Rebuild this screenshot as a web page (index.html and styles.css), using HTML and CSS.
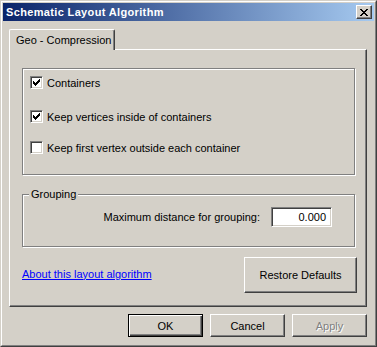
FILE: index.html
```html
<!DOCTYPE html>
<html lang="en">
<head>
    <meta charset="UTF-8">
    <title>Schematic Layout Algorithm</title>
    <link rel="stylesheet" href="styles.css">
</head>
<body>

    <div class="window">
        <div class="frame">
            <div class="titlebar">
                <span class="title">Schematic Layout Algorithm</span>
                <button class="close" title="Close">
                    <svg width="8" height="7" viewBox="0 0 8 7" shape-rendering="crispEdges">
                        <path d="M0 0h2v1H0zM6 0h2v1H6zM1 1h2v1H1zM5 1h2v1H5zM2 2h4v1H2zM3 3h2v1H3zM2 4h4v1H2zM1 5h2v1H1zM5 5h2v1H5zM0 6h2v1H0zM6 6h2v1H6z" fill="#000"/>
                    </svg>
                </button>
            </div>

            <div class="client">
                <div class="tabs">
                    <div class="tab">Geo - Compression</div>
                </div>

                <div class="panel">
                    <div class="group options">
                        <label class="check">
                            <span class="box checked">
                                <svg width="7" height="7" viewBox="0 0 7 7" shape-rendering="crispEdges"><path d="M0 2h1v3H0zM1 3h1v3H1zM2 4h1v3H2zM3 3h1v3H3zM4 2h1v3H4zM5 1h1v3H5zM6 0h1v3H6z" fill="#000"/></svg>
                            </span>
                            Containers
                        </label>
                        <label class="check">
                            <span class="box checked">
                                <svg width="7" height="7" viewBox="0 0 7 7" shape-rendering="crispEdges"><path d="M0 2h1v3H0zM1 3h1v3H1zM2 4h1v3H2zM3 3h1v3H3zM4 2h1v3H4zM5 1h1v3H5zM6 0h1v3H6z" fill="#000"/></svg>
                            </span>
                            Keep vertices inside of containers
                        </label>
                        <label class="check">
                            <span class="box"></span>
                            Keep first vertex outside each container
                        </label>
                    </div>

                    <div class="group grouping">
                        <span class="legend">Grouping</span>
                        <div class="field">
                            <label for="distance">Maximum distance for grouping:</label>
                            <span class="input" id="distance">0.000</span>
                        </div>
                    </div>

                    <div class="panel-footer">
                        <a href="#" class="link">About this layout algorithm</a>
                        <button class="btn restore">Restore Defaults</button>
                    </div>
                </div>

                <div class="actions">
                    <button class="btn default">OK</button>
                    <button class="btn">Cancel</button>
                    <button class="btn" disabled>Apply</button>
                </div>
            </div>
        </div>
    </div>

</body>
</html>
```

FILE: styles.css
```css
body {
    margin: 0;
    padding: 0;
    background-color: #d4d0c8;
    font-family: "Liberation Sans", Arial, sans-serif;
    font-size: 11px;
    color: #000;
}
.window {
    width: 377px;
    height: 347px;
    box-sizing: border-box;
    border: 1px solid;
    border-color: #d4d0c8 #404040 #404040 #d4d0c8;
    background-color: #d4d0c8;
}
.frame {
    height: 100%;
    box-sizing: border-box;
    border: 1px solid;
    border-color: #fff #808080 #808080 #fff;
    padding: 1px;
}
.titlebar {
    height: 18px;
    display: flex;
    justify-content: space-between;
    align-items: center;
    padding: 0 2px 0 3px;
    background: linear-gradient(to right, #0a246a, #a6caf0);
}
.title {
    color: white;
    font-weight: bold;
    font-size: 11px;
    letter-spacing: 0.35px;
}
.close {
    width: 16px;
    height: 14px;
    box-sizing: border-box;
    padding: 0;
    display: flex;
    align-items: center;
    justify-content: center;
    border: 1px solid;
    border-color: #fff #404040 #404040 #fff;
    box-shadow: inset -1px -1px 0 #808080;
    background-color: #d4d0c8;
}
.client {
    padding: 8px 7px 7px 6px;
}
.tabs {
    display: flex;
}
.tab {
    position: relative;
    z-index: 1;
    width: 106px;
    height: 21px;
    box-sizing: border-box;
    margin-bottom: -1px;
    padding: 0 0 1px 6px;
    display: flex;
    align-items: center;
    border-top: 1px solid #fff;
    border-left: 1px solid #fff;
    border-right: 1px solid #404040;
    border-radius: 2px 2px 0 0;
    box-shadow: inset -1px 0 0 #808080;
    background-color: #d4d0c8;
}
.panel {
    height: 258px;
    box-sizing: border-box;
    padding: 18px 11px 0 12px;
    border: 1px solid;
    border-color: #fff #404040 #404040 #fff;
    box-shadow: inset -1px -1px 0 #808080;
}
.group {
    border: 1px solid #808080;
    box-shadow: inset 1px 1px 0 #fff, 1px 1px 0 #fff;
}
.options {
    padding: 7px 0 20px 7px;
}
.check {
    display: flex;
    align-items: center;
    height: 13px;
    gap: 4px;
}
.check + .check {
    margin-top: 21px;
}
.check + .check + .check {
    margin-top: 18px;
}
.box {
    width: 13px;
    height: 13px;
    box-sizing: border-box;
    display: flex;
    align-items: center;
    justify-content: center;
    border: 1px solid;
    border-color: #808080 #fff #fff #808080;
    box-shadow: inset 1px 1px 0 #404040, inset -1px -1px 0 #d4d0c8;
    background-color: white;
}
.grouping {
    margin-top: 19px;
    padding: 0 22px 19px 0;
}
.legend {
    display: block;
    width: max-content;
    height: 13px;
    line-height: 13px;
    margin: -7px 0 0 6px;
    padding: 0 2px;
    background-color: #d4d0c8;
}
.field {
    margin-top: 6px;
    display: flex;
    justify-content: flex-end;
    align-items: center;
    gap: 11px;
}
.input {
    width: 61px;
    height: 20px;
    box-sizing: border-box;
    padding-right: 5px;
    display: flex;
    align-items: center;
    justify-content: flex-end;
    border: 1px solid;
    border-color: #808080 #fff #fff #808080;
    box-shadow: inset 1px 1px 0 #404040, inset -1px -1px 0 #d4d0c8;
    background-color: white;
}
.panel-footer {
    margin: 10px -2px 0 0;
    display: flex;
    justify-content: space-between;
    align-items: center;
}
.link {
    color: #0000ff;
    text-decoration: underline;
    padding-bottom: 3px;
}
.btn {
    width: 75px;
    height: 23px;
    box-sizing: border-box;
    padding: 0;
    font-family: inherit;
    font-size: 11px;
    color: #000;
    border: 1px solid;
    border-color: #fff #404040 #404040 #fff;
    box-shadow: inset -1px -1px 0 #808080;
    background-color: #d4d0c8;
}
.btn.default {
    border: 1px solid #000;
    box-shadow: inset 1px 1px 0 #fff, inset -1px -1px 0 #404040, inset -2px -2px 0 #808080;
}
.btn:disabled {
    color: #808080;
    text-shadow: 1px 1px 0 #fff;
}
.restore {
    width: 113px;
    height: 36px;
}
.actions {
    margin-top: 7px;
    display: flex;
    justify-content: flex-end;
    gap: 7px;
}
```
